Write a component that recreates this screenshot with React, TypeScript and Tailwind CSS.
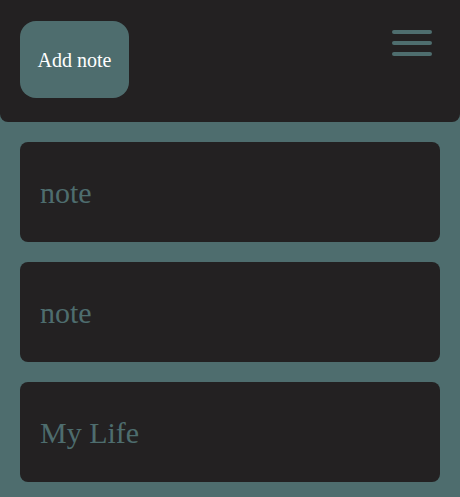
export default function App() {
  const notes = ["note", "note", "My Life"];
  return (
    <div className="min-h-[497px] bg-[#4e6d6e] [font-family:'Liberation_Serif','Times_New_Roman',serif]">
      <header className="flex h-[122px] items-start justify-between rounded-b-lg bg-[#232122] pl-5 pr-7 pt-[21px]">
        <button className="flex h-[77px] w-[109px] items-center justify-center rounded-2xl bg-[#4e6d6e] text-[20px] text-white [font-family:'Liberation_Serif',serif]">
          Add note
        </button>
        <div className="mt-[9px] flex w-10 flex-col gap-[7px]">
          <span className="block h-1 rounded-full bg-[#4e6d6e]" />
          <span className="block h-1 rounded-full bg-[#4e6d6e]" />
          <span className="block h-1 rounded-full bg-[#4e6d6e]" />
        </div>
      </header>
      <main className="flex flex-col gap-5 px-5 pt-5">
        {notes.map((n, i) => (
          <div key={i} className="flex h-[100px] items-center rounded-lg bg-[#232122] px-5 text-[30px] text-[#4e6d6e] [font-family:'Liberation_Serif',serif]">
            {n}
          </div>
        ))}
      </main>
    </div>
  );
}
